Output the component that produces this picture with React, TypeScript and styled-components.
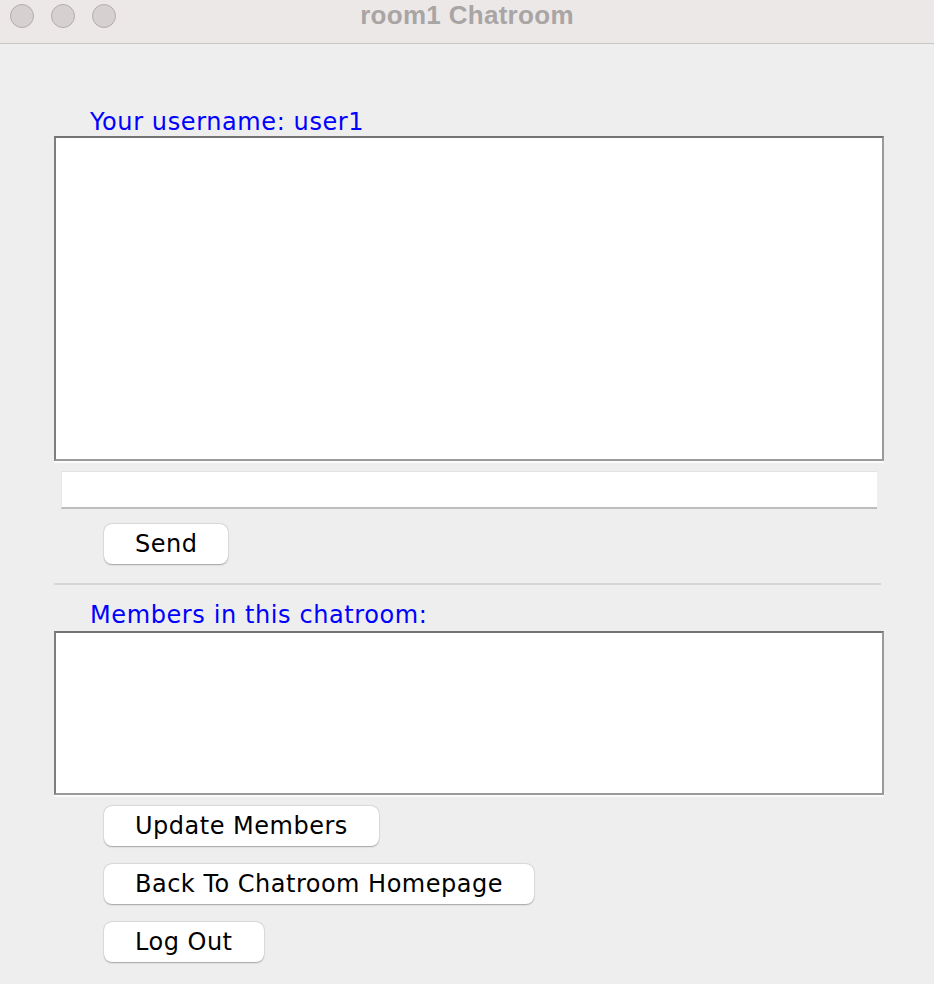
import React from 'react';
import styled, { createGlobalStyle } from 'styled-components';

const GlobalStyle = createGlobalStyle`
    html, body {
        margin: 0;
        padding: 0;
        background: #eeeeee;
    }
    #root {
        min-height: 984px;
    }
`;

const Window = styled.div`
    width: 934px;
    min-height: 984px;
    background: #eeeeee;
    font-family: "DejaVu Sans", Verdana, sans-serif;
`;

const TitleBar = styled.div`
    position: relative;
    height: 43px;
    background: #ede8e8;
    border-bottom: 1px solid #cac6c6;
    display: flex;
    align-items: flex-start;
    justify-content: center;
`;

const Lights = styled.div`
    position: absolute;
    left: 10px;
    top: 4px;
    display: flex;
    gap: 17px;
`;

const Light = styled.span`
    display: block;
    width: 22px;
    height: 22px;
    border-radius: 50%;
    background: #d6d0d0;
    border: 1px solid #b3adad;
`;

const Title = styled.div`
    font-family: "Liberation Sans", Arial, sans-serif;
    font-weight: bold;
    font-size: 26px;
    line-height: 30px;
    letter-spacing: 0.3px;
    color: #a9a5a5;
`;

const Content = styled.div`
    display: flex;
    flex-direction: column;
    align-items: flex-start;
    padding: 0 50px 0 54px;
`;

const Label = styled.div<{ $top: number }>`
    margin: ${(p) => p.$top}px 0 0 36px;
    font-size: 24px;
    line-height: 28px;
    color: #0000ff;
    letter-spacing: 0.6px;
`;

const TextArea = styled.div<{ $height: number; $gap: number }>`
    box-sizing: border-box;
    align-self: stretch;
    height: ${(p) => p.$height}px;
    margin-top: ${(p) => p.$gap}px;
    background: #ffffff;
    border: 2px solid #9a9a9a;
    border-top-color: #737373;
    border-left-color: #7e7e7e;
    box-shadow: 0 2px 0 #fbfbfb;
`;

const Input = styled.input`
    box-sizing: border-box;
    align-self: stretch;
    height: 38px;
    margin: 10px 7px 0;
    background: #ffffff;
    border: none;
    border-top: 1px solid #e2e2e2;
    border-left: 1px solid #e8e8e8;
    border-bottom: 2px solid #bdbdbd;
    outline: none;
`;

const Button = styled.button<{ $gap: number }>`
    box-sizing: border-box;
    height: 40px;
    margin: ${(p) => p.$gap}px 0 0 50px;
    padding: 0 31px;
    background: #ffffff;
    border: none;
    border-radius: 8px;
    box-shadow: 0 0.5px 1.5px rgba(0, 0, 0, 0.3), 0 0 0 0.5px rgba(0, 0, 0, 0.06);
    font-family: "DejaVu Sans", Verdana, sans-serif;
    font-size: 24px;
    line-height: 28px;
    letter-spacing: 0.5px;
    color: #000000;
`;

const Separator = styled.div`
    align-self: stretch;
    height: 2px;
    margin: 19px 3px 0 0;
    background: #d5d5d5;
`;

export default function App() {
    return (
        <Window>
            <GlobalStyle />
            <TitleBar>
                <Lights>
                    <Light />
                    <Light />
                    <Light />
                </Lights>
                <Title>room1 Chatroom</Title>
            </TitleBar>
            <Content>
                <Label $top={64}>Your username: user1</Label>
                <TextArea $height={325} $gap={0} />
                <Input type="text" />
                <Button $gap={15}>Send</Button>
                <Separator />
                <Label $top={16}>Members in this chatroom:</Label>
                <TextArea $height={164} $gap={2} />
                <Button $gap={11}>Update Members</Button>
                <Button $gap={18}>Back To Chatroom Homepage</Button>
                <Button $gap={18}>Log Out</Button>
            </Content>
        </Window>
    );
}
